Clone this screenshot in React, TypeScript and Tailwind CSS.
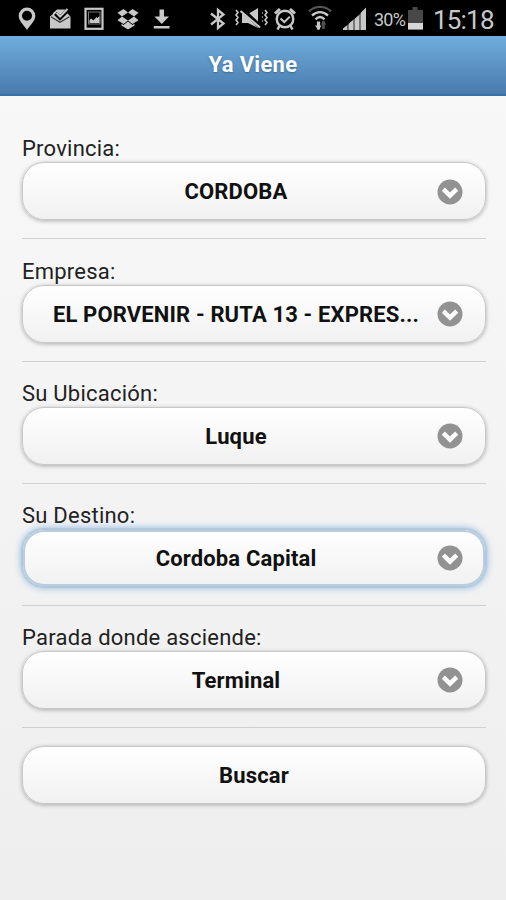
import type { ReactNode } from "react";

const fields = [
  { label: "Provincia:", value: "CORDOBA" },
  { label: "Empresa:", value: "EL PORVENIR - RUTA 13 - EXPRES..." },
  { label: "Su Ubicación:", value: "Luque" },
  { label: "Su Destino:", value: "Cordoba Capital", focused: true },
  { label: "Parada donde asciende:", value: "Terminal" },
];

function StatusBar() {
  return (
    <div className="flex h-9 items-start bg-black pt-1.5 pl-[18px] text-[#c8c8c8]">
      {/* location */}
      <svg className="mr-[13px]" width="18" height="25" viewBox="0 0 18 25" fill="currentColor" fillRule="evenodd">
        <path d="M9 1.500a8.300 8.300 0 0 0-8.300 8.300C.7 15 5.500 18.500 9 24c3.500-5.500 8.300-9 8.300-14.200A8.300 8.300 0 0 0 9 1.500zM9 4.800a5 5 0 1 1 0 10A5 5 0 0 1 9 4.800z" />
      </svg>
      {/* inbox */}
      <svg className="mr-[13px]" width="22" height="25" viewBox="0 0 22 25">
        <path d="M1 10.500 4 8v-1l4-3.500h8L19 8l2.500 2.500V22.500H1z" fill="currentColor" />
        <path d="m6.500 7.500 4.500 4.500 8.500-8.500" fill="none" stroke="#000" strokeWidth="4" />
        <path d="m7.500 7 3.600 3.600 7.400-7.600" fill="none" stroke="currentColor" strokeWidth="1.900" />
        <path d="m2 10.800 9 5.400 9.500-5.400" fill="none" stroke="#333" strokeWidth="1.200" />
      </svg>
      {/* gallery */}
      <svg className="mr-3" width="21" height="25" viewBox="0 0 21 25">
        <rect x="1.500" y="2.800" width="17" height="20" fill="none" stroke="currentColor" strokeWidth="2.200" />
        <rect x="4.500" y="6" width="11.500" height="12" fill="none" stroke="#777" strokeWidth="1" />
        <path d="M5.500 17v-3l1.500-1.500 2.500 2 3-3.500 1 1 2-2v7z" fill="currentColor" />
      </svg>
      {/* dropbox */}
      <svg className="mr-[14px]" width="22" height="25" viewBox="0 0 22 25" fill="currentColor">
        <path d="m6.500 3 4.500 3.600L5 10.500.500 6.800zM15.500 3l6 3.800L17 10.500l-6-3.900zM.500 14.200 5 10.500l6 3.900L6.500 18zM21.500 14.200 17 10.500l-6 3.900 4.500 3.600zM4.500 17.700l2 1.300L11 15.500l4.500 3.500 2-1.300v1.800L11 23.400l-6.500-3.900z" />
        <path d="m5.500 10.500 5.500-3.600 5.500 3.600-5.500 3.600z" fill="#000" />
      </svg>
      {/* download */}
      <svg width="18" height="25" viewBox="0 0 18 25" fill="currentColor">
        <path d="M6.500 3.500h4.500v7h5L8.800 18 1.500 10.500h5zM.800 20h15.700v2.500H.800z" />
      </svg>

      {/* bluetooth */}
      <svg className="ml-[38px] mr-[7px]" width="18" height="25" viewBox="0 0 18 25" fill="none" stroke="currentColor" strokeWidth="2.300">
        <path d="M2 7.500 14.500 17.500 9 22V4l5.500 4.500L2 18.500" />
      </svg>
      {/* vibrate + mute */}
      <svg className="mr-[5px]" width="34" height="25" viewBox="0 0 34 25">
        <path d="M8 8h6l10-6v20l-10-5H8z" fill="currentColor" />
        <path d="m7 2.500 20 19" stroke="#000" strokeWidth="4.500" />
        <path d="m6.500 5 19.500 16.500" stroke="currentColor" strokeWidth="2.200" />
        <path d="m2 4 2 2.500-2 2.500 2 2.500-2 2.500 2 2.500-2 2.500M31 4l2 2.500L31 9l2 2.500-2 2.500 2 2.500-2 2.500" fill="none" stroke="currentColor" strokeWidth="1.600" />
        <path d="M28.500 6v12" stroke="#777" strokeWidth="1.200" strokeDasharray="2 2" />
      </svg>
      {/* alarm */}
      <svg className="mr-[11px]" width="24" height="25" viewBox="0 0 24 25" fill="none" stroke="currentColor">
        <circle cx="12" cy="13" r="8.300" strokeWidth="2.400" />
        <path d="m7.500 12.500 3.800 3.600 5.500-5.500" strokeWidth="2" />
        <path d="M2 7.500 7 3M22 7.500 17 3" strokeWidth="3" />
        <path d="m6.500 20-2 3.500M17.500 20l2 3.500" strokeWidth="2.500" />
      </svg>
      {/* wifi */}
      <svg className="mr-[11px]" width="24" height="25" viewBox="0 0 24 25" fill="none" stroke="currentColor">
        <path d="M1 5.500C7-.500 17-.500 23 5.500" stroke="#555" strokeWidth="2.200" />
        <path d="M4 9.500c5-4.500 11-4.500 16 0M7.500 13.300c3-3 6-3 9 0" strokeWidth="2.400" />
        <path d="M10.500 23.500v-8" strokeWidth="3.200" />
        <path d="m7 19.500 3.500 4.500 3-4.500z" fill="currentColor" stroke="none" />
        <path d="M15.500 15v8" stroke="#555" strokeWidth="2.500" />
        <path d="m12.800 18.500 2.700-4 2.700 4z" fill="#555" stroke="none" />
      </svg>
      {/* signal */}
      <svg className="mr-[7px]" width="24" height="25" viewBox="0 0 24 25" fill="currentColor">
        <path d="M0 24v-1.500L4.500 19v5zM6 24v-6.500l4-3.500v10zM12 24V12.500L16 9v15zM18 24V6.500l5-5V24z" />
        <path d="M4.500 24v-5L6 17.500V24zM10 24V14l2-1.500V24zM16 24V9l2-2.500V24z" fill="#777" />
      </svg>
      <span className="mr-px w-[32px] pt-[3px] text-[18px] leading-[22px] tracking-[-0.8px] whitespace-nowrap">
        30%
      </span>
      {/* battery */}
      <svg className="mr-[9px]" width="17" height="25" viewBox="0 0 17 25">
        <path d="M5.500 1h5v3H16v19.500H1V4h4.500z" fill="#484848" />
        <path d="M1 17h15v6.500H1z" fill="#d6d6d6" />
      </svg>
      <span className="text-[26px] leading-[28px] tracking-[-0.8px]">15:18</span>
    </div>
  );
}

function Button({ children, focused, icon = true }: { children: ReactNode; focused?: boolean; icon?: boolean }) {
  return (
    <button
      className={
        "flex h-[58px] w-full shrink-0 items-center rounded-[22px] border bg-linear-to-b from-white to-[#f1f1f1] text-[22px] font-bold tracking-[0.15px] text-[#111] " +
        (focused
          ? "border-[#b2c6da] shadow-[inset_0_0_0_2px_#b9cde0,0_0_0_1px_#b2c8de,0_0_7px_1px_#8fb8e0]"
          : "border-[#c8c8c8] shadow-[0_1px_4px_rgba(0,0,0,0.3)]") +
        (icon ? " pl-[29px] pr-[22px]" : " px-[22px]")
      }
    >
      <span className="min-w-0 flex-1 truncate pt-[2px] text-center leading-[30px]">{children}</span>
      {icon && (
        <svg className="ml-[17px] mt-px shrink-0" width="26" height="26" viewBox="0 0 26 26">
          <circle cx="13" cy="13" r="12.500" fill="#929292" />
          <path d="m6.300 10.200 6.700 6.500 6.700-6.500" fill="none" stroke="#fff" strokeWidth="4.400" />
        </svg>
      )}
    </button>
  );
}

export default function App() {
  return (
    <div className="flex h-[900px] w-[506px] flex-col overflow-hidden bg-linear-to-b from-[#f9f9f9] to-[#eeeeee] font-[Roboto,sans-serif]">
      <StatusBar />
      <header className="flex h-[60px] items-center justify-center border-b-2 border-[#3a71a8] bg-linear-to-b from-[#6faddc] to-[#497bae] text-[22px] font-bold tracking-[0.3px] text-white [text-shadow:0_1px_2px_#3e6790]">
        <h1 className="pb-[2px]">Ya Viene</h1>
      </header>

      <main className="pt-[21.4px] pr-[20px] pl-[22px]">
        {fields.map((field) => (
          <div key={field.label} className="flex h-[122.1px] flex-col justify-end border-b border-[#d0d0d0] pb-[18px]">
            <label className="text-[22px] leading-[26px] tracking-[0.23px] text-[#222]">{field.label}</label>
            <Button focused={field.focused}>{field.value}</Button>
          </div>
        ))}
        <div className="pt-[18px]">
          <Button icon={false}>Buscar</Button>
        </div>
      </main>
    </div>
  );
}
